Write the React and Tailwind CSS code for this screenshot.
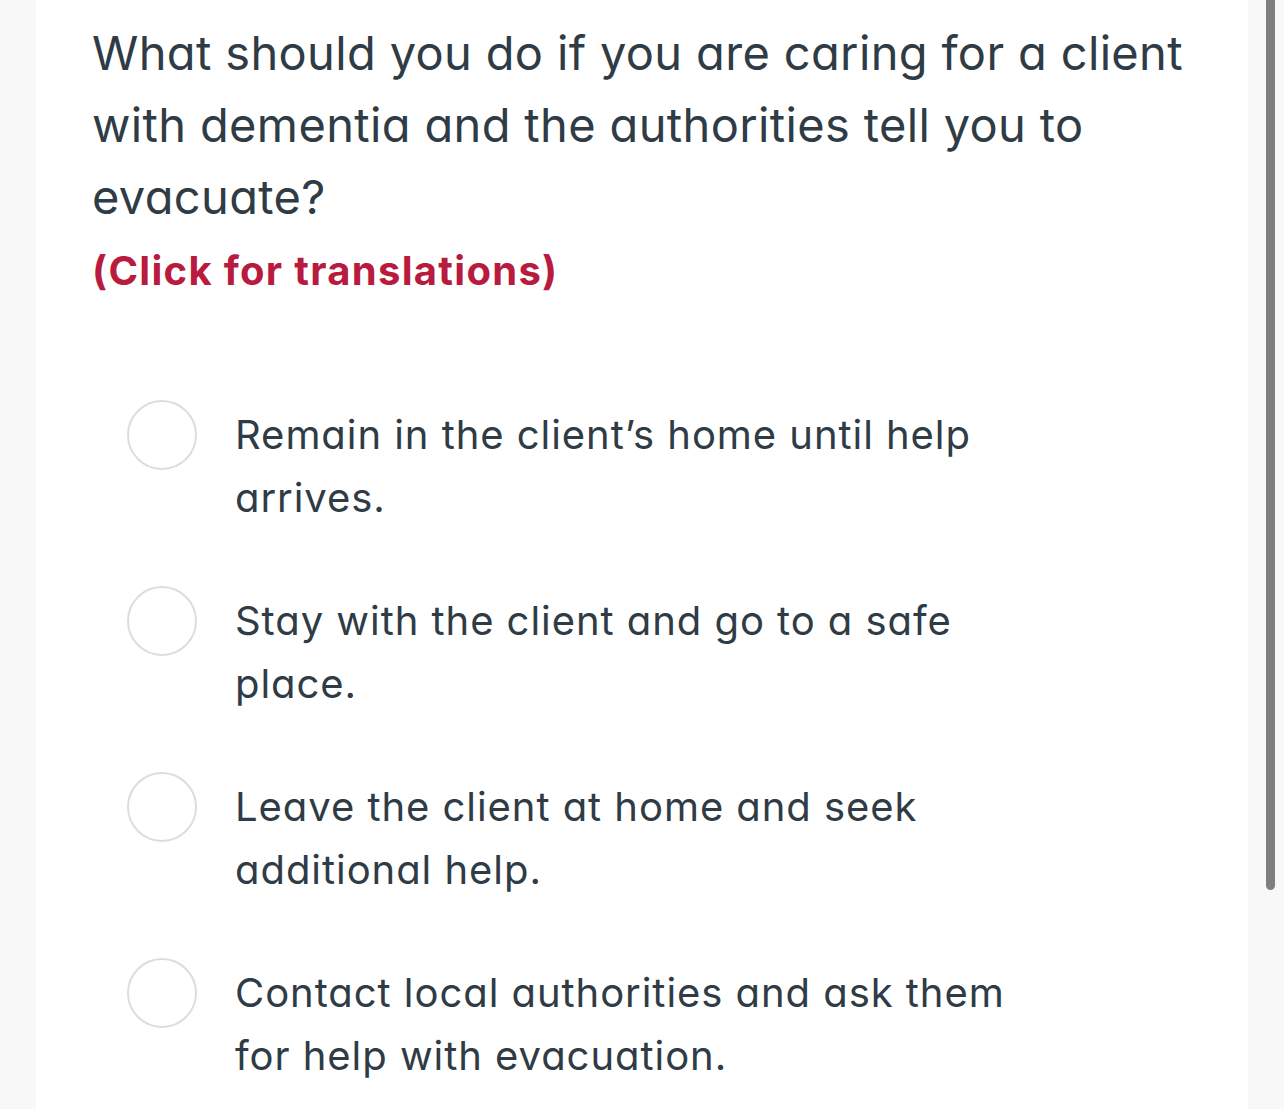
const options = [
  "Remain in the client’s home until help arrives.",
  "Stay with the client and go to a safe place.",
  "Leave the client at home and seek additional help.",
  "Contact local authorities and ask them for help with evacuation.",
];

function Radio() {
  return <div className="w-[70px] h-[70px] shrink-0 rounded-full border-2 border-[#d9dee4] bg-white" />;
}

export default function App() {
  return (
    <div className="h-[1109px] w-full flex bg-[#f8f8f8] overflow-hidden font-['Inter',sans-serif] [font-feature-settings:'cv11']">
      <div className="ml-[36px] w-[1212px] bg-white px-[56px] pt-[17px]">
        <h1 className="text-[47px] leading-[72px] text-[#2f3b45] font-normal tracking-[0.35px]">
          What should you do if you are caring for a client with dementia and the authorities tell you to evacuate?
        </h1>
        <button className="mt-[10px] text-[40px] leading-[56px] font-bold text-[#b81b3d] tracking-[1.3px] [font-feature-settings:normal]">
          (Click for translations)
        </button>

        <div className="mt-[104px] pl-[35px] flex flex-col gap-[60px]">
          {options.map((o) => (
            <label key={o} className="flex items-start gap-[38px] cursor-pointer">
              <div className="h-[63px] flex items-center">
                <Radio />
              </div>
              <span className="w-[810px] text-[40px] leading-[63px] text-[#2f3b45] tracking-[0.95px]">{o}</span>
            </label>
          ))}
        </div>
      </div>
      <div className="ml-[18px] w-[9px] h-[890px] rounded-b-full bg-[#7f7f7f]" />
    </div>
  );
}
